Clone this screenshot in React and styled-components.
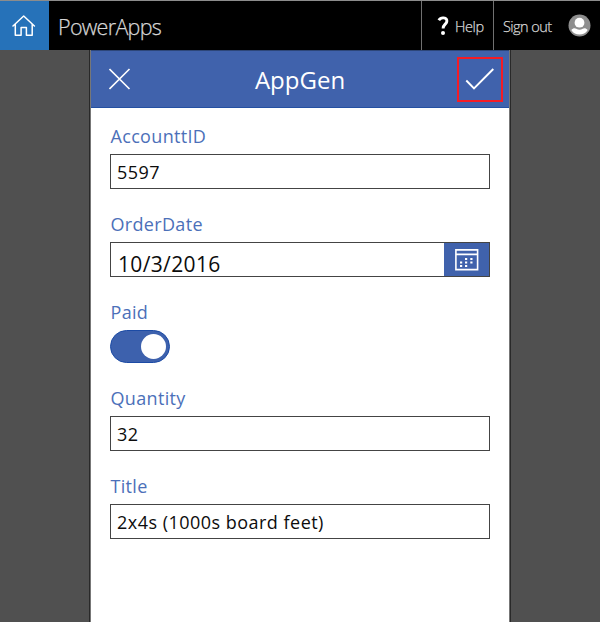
import React from 'react';
import styled, { createGlobalStyle } from 'styled-components';

const GlobalStyle = createGlobalStyle`
  * { box-sizing: border-box; }
  body { margin: 0; background: #505050; overflow: hidden; }
`;

const Page = styled.div`
  width: 600px;
  height: 622px;
  display: flex;
  flex-direction: column;
  background: #505050;
  font-family: 'Open Sans', sans-serif;
`;

const TopBar = styled.header`
  height: 50px;
  flex: none;
  display: flex;
  background: #000;
  border-top: 1px solid #8c8c8c;
  color: #d6d6d6;
`;

const HomeButton = styled.div`
  width: 49px;
  padding: 13px 0 0 12px;
  background: #2672b9;
  svg { display: block; }
`;

const Brand = styled.div`
  flex: 1;
  padding-left: 9px;
  font-size: 21.5px;
  font-weight: 300;
  line-height: 51px;
  letter-spacing: ${(p) => p.$spacing};
  white-space: nowrap;
  -webkit-text-stroke: 0.25px #d6d6d6;
`;

const BarItem = styled.div`
  width: ${(p) => p.$width}px;
  display: flex;
  align-items: center;
  padding-left: ${(p) => p.$pad}px;
  border-left: 1px solid #707070;
  svg { flex: none; }
`;

const BarText = styled.span`
  width: ${(p) => p.$width}px;
  margin-left: ${(p) => p.$indent || 0}px;
  font-size: 14.5px;
  line-height: 20px;
  font-weight: 300;
  padding-top: 2px;
  white-space: nowrap;
  letter-spacing: ${(p) => p.$spacing};
  -webkit-text-stroke: 0.25px #d6d6d6;
`;

const Phone = styled.main`
  width: 420px;
  flex: 1;
  margin-left: 90px;
  background: #fff;
  border: solid #777;
  border-width: 0 1px;
  box-shadow: -1px 0 #292929, 1px 0 #292929;
  clip-path: inset(0 -1px);
`;

const AppBar = styled.div`
  height: 58px;
  display: flex;
  align-items: center;
  justify-content: space-between;
  padding: 0 6px 0 18px;
  background: #4062ac;
  border-top: 1px solid #2d4679;
  border-bottom: 1px solid #2450a2;
  svg { display: block; }
`;

const AppTitle = styled.h1`
  margin: 0 0 0 12px;
  padding-top: 1px;
  font-size: 24px;
  font-weight: 400;
  line-height: 32px;
  color: #fff;
`;

const SubmitBox = styled.div`
  width: 46px;
  height: 45px;
  border: 2px solid #f51c25;
  display: flex;
  align-items: center;
  justify-content: center;
`;

const Form = styled.div`
  padding: 16px 19px 0;
`;

const Field = styled.div`
  height: ${(p) => p.$height}px;
`;

const Label = styled.div`
  height: 30px;
  padding-left: 0.5px;
  font-size: 18px;
  line-height: 24px;
  color: #4c70b9;
  white-space: nowrap;
  letter-spacing: 0.33px;
`;

const Input = styled.div`
  height: 35px;
  display: flex;
  justify-content: space-between;
  border: 1px solid #444;
  color: #0c0c0c;
  background: #fff;
`;

const Value = styled.span`
  padding-left: ${(p) => (p.$date ? 7 : 6)}px;
  font-size: ${(p) => (p.$date ? 21 : 18)}px;
  line-height: ${(p) => (p.$date ? 43 : 35)}px;
  height: 33px;
  white-space: nowrap;
  letter-spacing: ${(p) => (p.$date ? 0.35 : 0.48)}px;
`;

const DateButton = styled.div`
  width: 45px;
  padding: 6px 0 0 11px;
  background: #4062ac;
  svg { display: block; }
`;

const Toggle = styled.div`
  width: 60px;
  height: 33px;
  border-radius: 17px;
  background: #3d61ad;
  border: 1px solid #1c4ba5;
  display: flex;
  align-items: center;
  justify-content: flex-end;
  padding-right: 3px;
`;

const Knob = styled.div`
  width: 25px;
  height: 25px;
  border-radius: 50%;
  background: #fff;
`;

const HomeIcon = () => (
  <svg width="24" height="24" viewBox="0 0 24 24" fill="none" stroke="#fff" strokeWidth="1.5" strokeLinejoin="round" strokeLinecap="round">
    <path d="M1 12 11.7 2 22.4 12M3.3 10.3V21.3H9.1V13.5H14.4V21.3H20.2V10.3" />
  </svg>
);

const HelpIcon = () => (
  <svg width="12" height="20" viewBox="0 0 12 20">
    <path d="M1.8 4.2C3 2.2 5 1.7 6.7 1.9C9.2 2.2 10.2 3.7 9.7 5.9C9.2 8.2 6.1 8.6 6.1 12.5" fill="none" stroke="#fff" strokeWidth="2.9" />
    <circle cx="6" cy="17" r="2" fill="#fff" />
  </svg>
);

const UserIcon = () => (
  <svg width="23" height="23" viewBox="0 0 23 23">
    <circle cx="11.5" cy="11.5" r="11" fill="#8e8e8e" />
    <circle cx="11.5" cy="8.7" r="4.9" fill="#fff" />
    <path d="M3.3 16C5 14 7 14 8.3 14.8C10.4 16 12.7 16 14.7 14.8C16 14 18 14 19.7 16C17.6 19.5 15 20.5 11.5 20.5C8 20.5 5.4 19.5 3.3 16Z" fill="#fff" />
  </svg>
);

const CloseIcon = () => (
  <svg width="22" height="22" viewBox="0 0 22 22" fill="none" stroke="#fff" strokeWidth="1.6">
    <path d="M.5 1 20.5 21M20.5 1 .5 21" />
  </svg>
);

const CheckIcon = () => (
  <svg width="30" height="24" viewBox="0 0 30 24" fill="none" stroke="#fff" strokeWidth="1.9">
    <path d="M1.3 13.5 9 21.3 28.3 2" />
  </svg>
);

const CalendarIcon = () => (
  <svg width="24" height="22" viewBox="0 0 24 22" fill="none" stroke="#fff">
    <path d="M.9.9H22.6V20.6H.9ZM.9 5.4H22.6" strokeWidth="1.6" />
    <path d="M10 10H12.2M15.3 10H17.5M5 13.6H7.2M10 13.6H12.2M15.3 13.6H17.5M5 17H7.2M10 17H12.2" strokeWidth="2" />
  </svg>
);

export default function App() {
  return (
    <Page>
      <GlobalStyle />
      <TopBar>
        <HomeButton><HomeIcon /></HomeButton>
        <Brand $spacing="-0.7px">PowerApps</Brand>
        <BarItem $width={72} $pad={15}>
          <HelpIcon />
          <BarText $width={38} $indent={6} $spacing="-0.4px">Help</BarText>
        </BarItem>
        <BarItem $width={107} $pad={9}>
          <BarText $width={65} $spacing="-0.55px">Sign out</BarText>
          <UserIcon />
        </BarItem>
      </TopBar>
      <Phone>
        <AppBar>
          <CloseIcon />
          <AppTitle>AppGen</AppTitle>
          <SubmitBox><CheckIcon /></SubmitBox>
        </AppBar>
        <Form>
          <Field $height={88}>
            <Label>AccounttID</Label>
            <Input><Value>5597</Value></Input>
          </Field>
          <Field $height={88}>
            <Label>OrderDate</Label>
            <Input>
              <Value $date>10/3/2016</Value>
              <DateButton><CalendarIcon /></DateButton>
            </Input>
          </Field>
          <Field $height={86}>
            <Label>Paid</Label>
            <Toggle><Knob /></Toggle>
          </Field>
          <Field $height={88}>
            <Label>Quantity</Label>
            <Input><Value>32</Value></Input>
          </Field>
          <Field $height={88}>
            <Label>Title</Label>
            <Input><Value>2x4s (1000s board feet)</Value></Input>
          </Field>
        </Form>
      </Phone>
    </Page>
  );
}
